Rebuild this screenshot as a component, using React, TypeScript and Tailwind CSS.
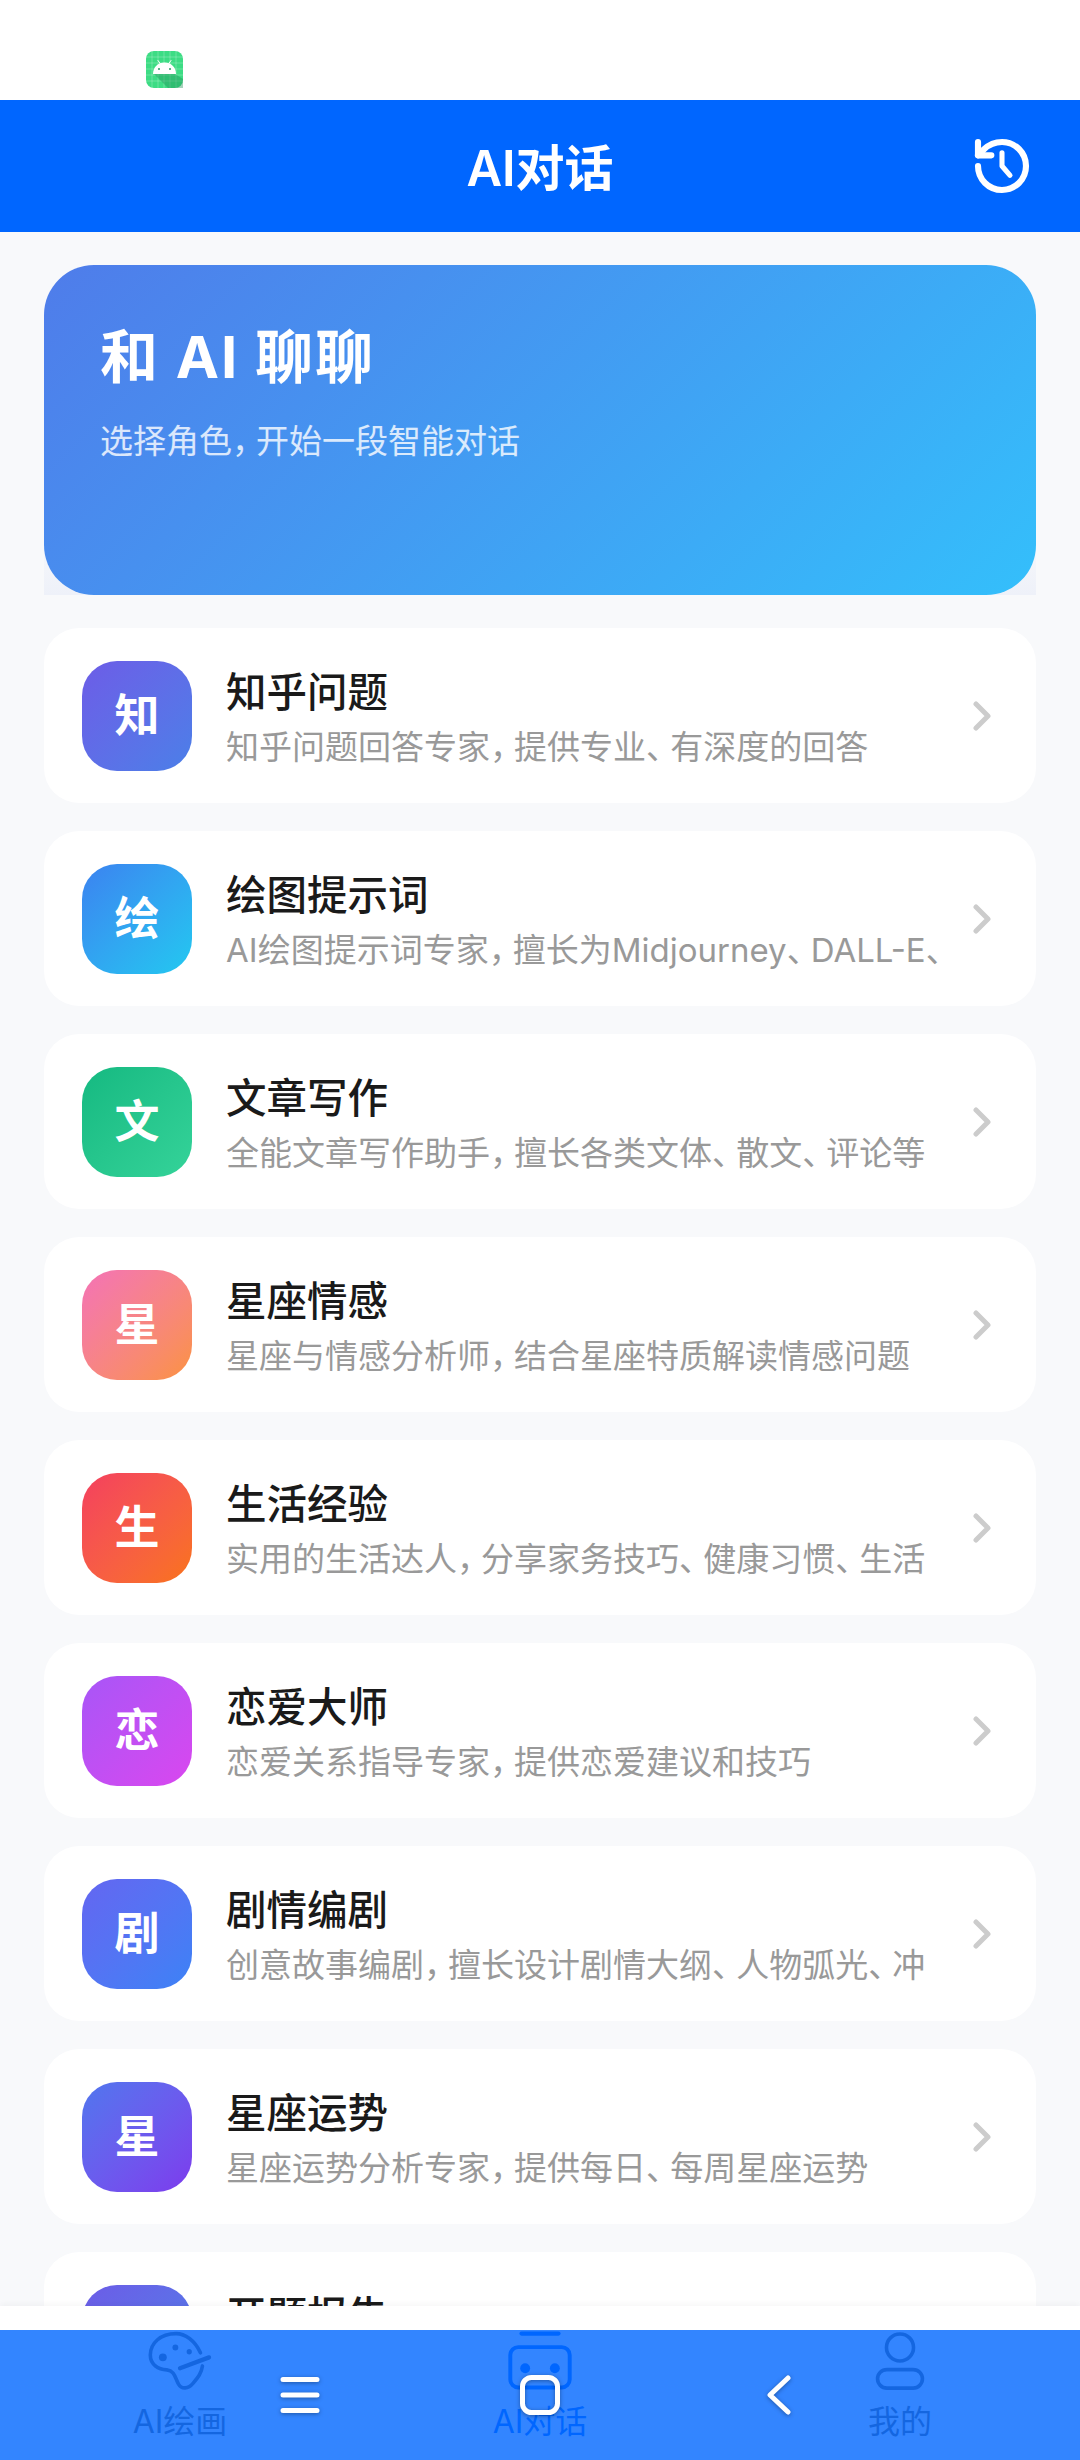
import React from "react";

const font = { fontFamily: 'Inter, "Noto Sans CJK SC", sans-serif' };

function Txt({ text }: { text: string }) {
  return (
    <>
      {text.split(/([，、])/).map((p, i) =>
        p === "，" || p === "、" ? (
          <span key={i} className="tracking-[-0.27em]">
            {p}
          </span>
        ) : (
          <span key={i}>{p}</span>
        )
      )}
    </>
  );
}

const items = [
  { c: "知", t: "知乎问题", s: "知乎问题回答专家，提供专业、有深度的回答", g: "from-[#6c5ce7] to-[#4a7fe8]" },
  { c: "绘", t: "绘图提示词", s: "AI绘图提示词专家，擅长为Midjourney、DALL-E、", g: "from-[#3b82f0] to-[#22c8f0]" },
  { c: "文", t: "文章写作", s: "全能文章写作助手，擅长各类文体、散文、评论等", g: "from-[#14b981] to-[#34d399]" },
  { c: "星", t: "星座情感", s: "星座与情感分析师，结合星座特质解读情感问题", g: "from-[#f472b6] to-[#fb923c]" },
  { c: "生", t: "生活经验", s: "实用的生活达人，分享家务技巧、健康习惯、生活", g: "from-[#f43f5e] to-[#f97316]" },
  { c: "恋", t: "恋爱大师", s: "恋爱关系指导专家，提供恋爱建议和技巧", g: "from-[#a855f7] to-[#d946ef]" },
  { c: "剧", t: "剧情编剧", s: "创意故事编剧，擅长设计剧情大纲、人物弧光、冲", g: "from-[#6366f1] to-[#3b82f6]" },
  { c: "星", t: "星座运势", s: "星座运势分析专家，提供每日、每周星座运势", g: "from-[#4f76ee] to-[#7c3aed]" },
  { c: "开", t: "开题报告", s: "开题报告撰写专家，提供研究思路与框架", g: "from-[#6c5ce7] to-[#4a7fe8]" },
];

function AndroidIcon() {
  return (
    <svg width="37" height="37" viewBox="0 0 37 37">
      <rect width="37" height="37" rx="8" fill="#3ddc84" />
      <g stroke="#ffffff" strokeOpacity="0.3" strokeWidth="0.8">
        {[6, 12, 18, 24, 30].map((v) => (
          <React.Fragment key={v}>
            <line x1={v} y1="0" x2={v} y2="37" />
            <line x1="0" y1={v} x2="37" y2={v} />
          </React.Fragment>
        ))}
      </g>
      <path d="M8 23 L22 37 L37 37 L37 28 L29 23 Z" fill="#1f8f55" fillOpacity="0.4" />
      <path d="M12 9.5 L14.5 13 M25 9.5 L22.5 13" stroke="#ffffff" strokeWidth="1" strokeLinecap="round" />
      <path d="M7 23 C7 16 12 11.5 18.5 11.5 C25 11.5 30 16 30 23 Z" fill="#ffffff" />
      <circle cx="13" cy="18" r="1" fill="#2a9d63" />
      <circle cx="24" cy="18" r="1" fill="#2a9d63" />
    </svg>
  );
}

function HistoryIcon() {
  return (
    <svg width="64" height="64" viewBox="0 0 24 24" fill="none" stroke="#ffffff" strokeWidth="2.3" strokeLinecap="round" strokeLinejoin="round">
      <path d="M3 12a9 9 0 1 0 9-9 9.75 9.75 0 0 0-6.74 2.74L3 8" />
      <path d="M3 3v5h5" />
      <path d="M12 7v5l3 3.5" strokeWidth="1.9" />
    </svg>
  );
}

function Chevron() {
  return (
    <svg width="18" height="30" viewBox="0 0 18 30" fill="none" stroke="#cccccc" strokeWidth="5" strokeLinecap="round" strokeLinejoin="round" className="shrink-0">
      <path d="M3 3 L15 15 L3 27" />
    </svg>
  );
}

function Card({ c, t, s, g }: { c: string; t: string; s: string; g: string }) {
  return (
    <div className="flex h-[175px] shrink-0 items-center rounded-[35px] bg-white pl-[38px] pr-[45px]">
      <div className={`flex h-[110px] w-[110px] shrink-0 items-center justify-center rounded-[35px] bg-gradient-to-br ${g} text-[45px] font-bold text-white`}>
        {c}
      </div>
      <div className="ml-[34px] min-w-0 flex-1 overflow-hidden pt-[5px]">
        <div className="whitespace-nowrap text-[40.5px] font-medium leading-[52px] text-[#1a1a1a]">{t}</div>
        <div className="mt-[5px] whitespace-nowrap text-[33px] leading-[46px] text-[#999999]">
          <Txt text={s} />
        </div>
      </div>
      <Chevron />
    </div>
  );
}

function Tab({ label, active, children }: { label: string; active?: boolean; children: React.ReactNode }) {
  return (
    <div className={`flex flex-col items-center ${active ? "text-[#0066ff]" : "text-[#666666]"}`}>
      {children}
      <div className="mt-[8px] text-[32px] leading-[44px]">{label}</div>
    </div>
  );
}

export default function App() {
  return (
    <div className="relative flex h-[2460px] w-[1080px] flex-col overflow-hidden bg-[#f8f9fb]" style={font}>
      <div className="h-[100px] shrink-0 bg-white pl-[146px] pt-[51px]">
        <AndroidIcon />
      </div>
      <header className="relative flex h-[132px] shrink-0 items-center justify-center bg-[#0066ff] pt-[6px]">
        <span className="text-[49px] font-semibold text-white">AI对话</span>
        <div className="absolute right-[46px] top-[34px]">
          <HistoryIcon />
        </div>
      </header>
      <main className="flex min-h-0 flex-1 flex-col overflow-hidden px-[44px] pt-[33px]">
        <div className="mb-[33px] h-[330px] shrink-0 bg-gradient-to-b from-transparent from-80% to-[#eef1f9]">
          <div className="h-full rounded-[50px] bg-[linear-gradient(135deg,#4f7cea,#34bffb)] pl-[56px] pt-[53px]">
            <div className="text-[58px] font-bold leading-[78px] tracking-[2px] text-white">和 AI 聊聊</div>
            <div className="mt-[22px] text-[33px] leading-[46px] text-white/80">
              <Txt text="选择角色，开始一段智能对话" />
            </div>
          </div>
        </div>
        <div className="flex flex-col gap-[28px]">
          {items.map((it, i) => (
            <Card key={i} {...it} />
          ))}
        </div>
      </main>
      <nav className="grid h-[154px] shrink-0 grid-cols-3 bg-white pt-[24px] shadow-[0_-2px_6px_rgba(0,0,0,0.04)]">
        <Tab label="AI绘画">
          <svg width="66" height="62" viewBox="140 30 200 186" fill="none" stroke="currentColor" strokeWidth="11" strokeLinecap="round">
            <path d="M302 98 C285 60 255 40 228 40 C180 40 150 70 150 105 C150 135 175 148 200 150 C225 153 225 175 235 192 C245 210 265 208 280 190 C295 172 305 160 308 138" />
            <path d="M240 145 L328 112" strokeWidth="13" />
            <circle cx="188" cy="112" r="12" fill="currentColor" stroke="none" />
            <circle cx="226" cy="82" r="9" fill="currentColor" stroke="none" />
            <circle cx="268" cy="95" r="8" fill="currentColor" stroke="none" />
          </svg>
        </Tab>
        <Tab label="AI对话" active>
          <svg width="66" height="62" viewBox="140 30 200 186" fill="none" stroke="currentColor" strokeWidth="12" strokeLinecap="round">
            <path d="M184 40 L296 40" strokeWidth="13" />
            <rect x="150" y="81" width="180" height="122" rx="24" />
            <circle cx="195" cy="145" r="15" fill="currentColor" stroke="none" />
            <circle cx="285" cy="145" r="15" fill="currentColor" stroke="none" />
          </svg>
        </Tab>
        <Tab label="我的">
          <svg width="66" height="62" viewBox="380 30 200 186" fill="none" stroke="currentColor" strokeWidth="11">
            <circle cx="480" cy="82" r="41" />
            <rect x="412" y="149" width="136" height="56" rx="28" />
          </svg>
        </Tab>
      </nav>
      <div className="absolute bottom-0 left-0 right-0 flex h-[130px] items-center justify-center gap-[200px] bg-[#0066ff]/80">
        <svg width="40" height="44" viewBox="0 0 40 44" fill="none" stroke="#ffffff" strokeWidth="5" strokeLinecap="round" className="drop-shadow-[0_1px_2px_rgba(0,0,0,0.35)]">
          <path d="M3 6.5 H37 M3 22 H37 M3 37.5 H37" />
        </svg>
        <svg width="40" height="40" viewBox="0 0 40 40" fill="none" stroke="#ffffff" strokeWidth="5" className="drop-shadow-[0_1px_2px_rgba(0,0,0,0.35)]">
          <rect x="2.5" y="2.5" width="35" height="35" rx="9" />
        </svg>
        <svg width="40" height="40" viewBox="0 0 40 40" fill="none" stroke="#ffffff" strokeWidth="5" strokeLinecap="round" strokeLinejoin="round" className="drop-shadow-[0_1px_2px_rgba(0,0,0,0.35)]">
          <path d="M28 3 L10 20 L28 37" />
        </svg>
      </div>
    </div>
  );
}
